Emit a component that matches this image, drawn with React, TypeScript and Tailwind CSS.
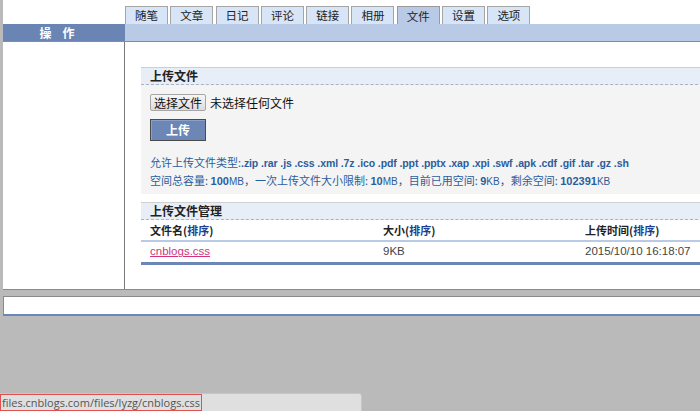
const tabs = ["随笔", "文章", "日记", "评论", "链接", "相册", "文件", "设置", "选项"];

const cjk = "font-['SimSun','Noto_Sans_CJK_SC',sans-serif]";
const latin = "font-['Liberation_Sans','Noto_Sans_CJK_SC',sans-serif]";

function Tabs() {
  return (
    <div className="flex h-[24px] items-end">
      <div className="w-[122px] shrink-0" />
      <div className="flex gap-[2.3px]">
        {tabs.map((t) => {
          const active = t === "文件";
          return (
            <div
              key={t}
              className={
                active
                  ? "w-[43px] h-[19px] -mb-px border border-b-0 border-[#9a9a9a] bg-[#b8cae6] text-[11.5px] leading-[18px] text-center text-[#222]"
                  : "w-[43px] h-[18px] border border-b-0 border-[#a5a5a5] bg-[#d8e5f7] text-[11.5px] leading-[17px] text-center text-[#222]"
              }
            >
              {t}
            </div>
          );
        })}
      </div>
    </div>
  );
}

function UploadPanel() {
  return (
    <div className="border-t border-[#cfcfcf]">
      <div className="h-[17px] bg-[#e7eef8] border-b border-dashed border-[#a9b3c2] pl-[9px] text-[12px] font-bold leading-[16px] text-[#222]">
        上传文件
      </div>
      <div className="bg-[#f4f4f4] pl-[9px] pt-[9px] pb-[4px]">
        <div className="flex items-center gap-[4px] h-[17px]">
          <div className="h-[17px] w-[56px] border border-[#a6a6a6] rounded-[2px] bg-gradient-to-b from-[#f6f6f6] to-[#dcdcdc] text-[12px] leading-[15px] text-center text-[#111]">
            选择文件
          </div>
          <span className="text-[12px] text-[#111]">未选择任何文件</span>
        </div>
        <div className="mt-[8px] h-[22px] w-[56px] border border-[#4a4a4a] shadow-[inset_1px_1px_0_#8aa0c8] bg-[#6c86b6] text-[12px] font-bold leading-[20px] text-center text-white">
          上传
        </div>
        <div className={`mt-[13px] text-[11px] leading-[17px] text-[#2c5d9d] whitespace-nowrap ${latin}`}>
          <div>
            <span className={cjk}>允许上传文件类型:</span>
            <b className="text-[10.5px] tracking-[-0.1px]">.zip .rar .js .css .xml .7z .ico .pdf .ppt .pptx .xap .xpi .swf .apk .cdf .gif .tar .gz .sh</b>
          </div>
          <div>
            <span className={cjk}>空间总容量: </span>
            <b>100</b><span className="text-[10px]">MB</span><span className={cjk}>，一次上传文件大小限制: </span>
            <b>10</b><span className="text-[10px]">MB</span><span className={cjk}>，目前已用空间: </span>
            <b>9</b><span className="text-[10px]">KB</span><span className={cjk}>，剩余空间: </span>
            <b>102391</b><span className="text-[10px]">KB</span>
          </div>
        </div>
      </div>
    </div>
  );
}

function FilePanel() {
  return (
    <div className="mt-[8px] border-t border-[#cfcfcf]">
      <div className="h-[17px] bg-[#e7eef8] border-b border-dashed border-[#a9b3c2] pl-[9px] text-[12px] font-bold leading-[16px] text-[#222]">
        上传文件管理
      </div>
      <div className="grid grid-cols-[233px_202px_1fr] pl-[9px] h-[22px] items-center text-[11px] font-bold text-[#222] border-b-2 border-[#b8cae6]">
        <div>
          文件名(<span className="text-[#1d3f91]">排序</span>)
        </div>
        <div>
          大小(<span className="text-[#1d3f91]">排序</span>)
        </div>
        <div>
          上传时间(<span className="text-[#1d3f91]">排序</span>)
        </div>
      </div>
      <div className={`grid grid-cols-[233px_202px_1fr] pl-[9px] h-[23px] items-center text-[11.5px] text-[#444] border-b-[3px] border-[#6c86b6] ${latin}`}>
        <div>
          <span className="text-[#d0337f] underline">cnblogs.css</span>
        </div>
        <div>9KB</div>
        <div className="whitespace-nowrap">2015/10/10 16:18:07</div>
      </div>
    </div>
  );
}

export default function App() {
  return (
    <div className={`relative w-[700px] h-[411px] overflow-hidden bg-[#bababa] pl-[3px] ${cjk}`}>
      <div className="w-[720px] bg-white border-b border-[#8a8a8a]">
        <Tabs />
        <div className="flex h-[18px] border-b border-[#8c8c8c]">
          <div className="w-[122px] shrink-0 bg-[#6a85b3] pr-[14px] text-center text-[12px] font-bold leading-[17px] text-white">
            操&nbsp;&nbsp;&nbsp;&nbsp;作
          </div>
          <div className="flex-1 bg-[#b8cae6]" />
        </div>
        <div className="flex h-[247px]">
          <div className="w-[122px] shrink-0 border-r border-[#7a7a7a]" />
          <div className="flex-1 pl-[16px] pt-[25px]">
            <UploadPanel />
            <FilePanel />
          </div>
        </div>
      </div>
      <div className="mt-[6px] w-[720px] h-[20px] bg-white border border-[#8a8a8a] border-b-2 border-b-[#6c86b6]" />
      <div className="absolute left-0 bottom-0 w-[362px] h-[18px] bg-[#dfdfdf] border-t border-r border-[#c6c6c6] rounded-tr-[3px]">
        <div className="w-[202px] h-[17px] border border-[#e05050] pl-[1px] text-[11px] leading-[15px] text-[#555] font-['Open_Sans','DejaVu_Sans',sans-serif]">
          files.cnblogs.com/files/lyzg/cnblogs.css
        </div>
      </div>
    </div>
  );
}
